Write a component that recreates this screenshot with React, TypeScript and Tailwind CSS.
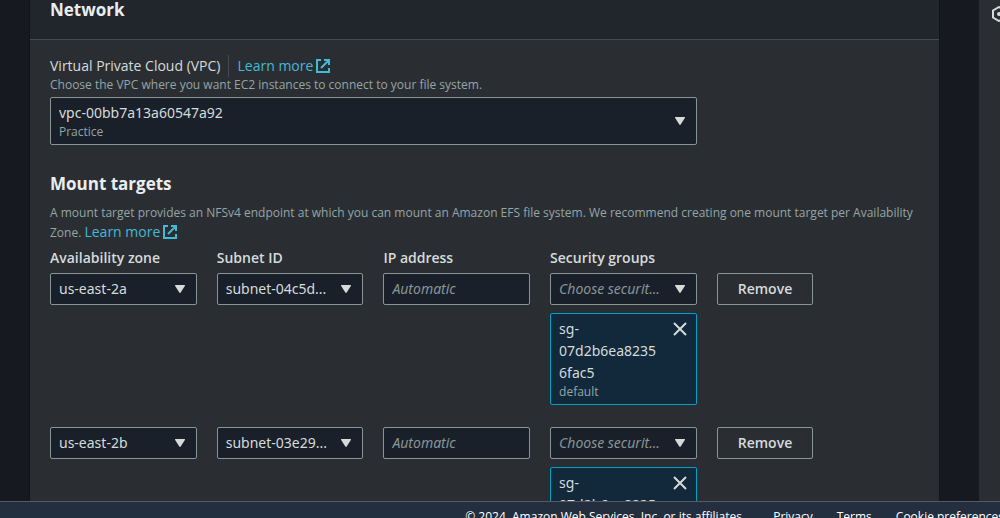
import React from "react";

function Caret() {
  return (
    <svg viewBox="0 0 10 8" className="pointer-events-none col-start-1 row-start-1 mr-3 h-2 w-2.5 self-center justify-self-end fill-[#d5dbdb]" aria-hidden="true">
      <path d="M0.3 0H9.7Q10.2 0.3 9.8 1L5.7 7.5Q5 8.4 4.3 7.5L0.2 1Q-0.2 0.3 0.3 0Z" />
    </svg>
  );
}

function ExternalIcon() {
  return (
    <svg viewBox="0 0 14 14" className="ml-[3px] inline-block size-3.5 fill-none stroke-[#44b9d6] stroke-2 align-[-2px]" aria-hidden="true">
      <path d="M5 1H1V13H13V9M8 1H13V6M12.5 1.5L5 9" />
    </svg>
  );
}

function LearnMore() {
  return (
    <a href="#learn-more" className="text-[14px] leading-none whitespace-nowrap text-[#44b9d6]">
      Learn more
      <ExternalIcon />
    </a>
  );
}

const fieldClass =
  "h-8 w-full min-w-0 appearance-none rounded-xs border border-[#879596] bg-[#1a2029] pl-2 font-['Noto_Sans',sans-serif] text-[14px] leading-5";

function Dropdown({ label, value, placeholder = false }: { label: string; value: string; placeholder?: boolean }) {
  return (
    <div className="grid self-start">
      <select
        aria-label={label}
        className={`${fieldClass} col-start-1 row-start-1 pr-7 ${placeholder ? "text-[#879596] italic" : "text-[#d5dbdb]"}`}
      >
        <option>{value}</option>
      </select>
      <Caret />
    </div>
  );
}

function SecurityGroupToken() {
  return (
    <div className="mt-2 flex items-start justify-between rounded-xs border border-[#00a1c9] bg-[#12293b] py-1 pr-2 pl-2 text-[#d5dbdb]">
      <div className="w-[100px]">
        <p className="font-['Noto_Sans',sans-serif] text-[14px] leading-[22px] break-words">sg-<br />07d2b6ea82356fac5</p>
        <p className="text-[12px] leading-4 text-[#95a5a6]">default</p>
      </div>
      <button type="button" aria-label="Remove security group" className="mt-[3px]">
        <svg viewBox="0 0 16 16" className="size-4 fill-none stroke-[#d5dbdb] stroke-2" aria-hidden="true">
          <path d="M2 2L14 14M14 2L2 14" />
        </svg>
      </button>
    </div>
  );
}

function TargetRow({ zone, subnet }: { zone: string; subnet: string }) {
  return (
    <div className="grid grid-cols-4 gap-x-5">
      <div className="col-span-3 grid grid-cols-4 gap-x-5">
        <Dropdown label="Availability zone" value={zone} />
        <Dropdown label="Subnet ID" value={subnet} />
        <div>
          <input aria-label="IP address" placeholder="Automatic" className={`${fieldClass} pb-0.5 text-[#d5dbdb] placeholder:text-[#879596] placeholder:italic`} />
        </div>
        <div>
          <Dropdown label="Security groups" value="Choose securit..." placeholder />
          <SecurityGroupToken />
        </div>
      </div>
      <div>
        <button type="button" className="h-8 rounded-xs border border-[#879596] px-5 text-[14px] leading-5 font-semibold text-[#d5dbdb]">
          Remove
        </button>
      </div>
    </div>
  );
}

const targets = [
  { zone: "us-east-2a", subnet: "subnet-04c5d..." },
  { zone: "us-east-2b", subnet: "subnet-03e29..." },
];

export default function App() {
  return (
    <div className="flex h-screen flex-col overflow-hidden bg-[#16191f] font-['Open_Sans','Noto_Sans',sans-serif] text-[#d5dbdb]">
      <div className="flex min-h-0 flex-1 overflow-hidden pl-[29px]">
        <main className="h-max min-w-0 flex-1 border-x border-[#121418] bg-[#2a2e33]">
          <header className="flex h-10 items-start border-b border-[#444a50] bg-[#21252c] px-5">
            <h2 className="text-[17px] leading-5 font-bold text-[#eaeded]">Network</h2>
          </header>
          <div className="px-5 pt-[15px] pb-5">
            <div className="flex items-center text-[14px] leading-[22px]">
              <label htmlFor="vpc" className="border-r border-[#444a50] pr-2">
                Virtual Private Cloud (VPC)
              </label>
              <span className="pl-2"><LearnMore /></span>
            </div>
            <p className="text-[12px] leading-4 text-[#95a5a6]">
              Choose the VPC where you want EC2 instances to connect to your file system.
            </p>
            <div className="grid grid-cols-4 gap-x-5 pt-1">
              <div className="col-span-3 grid">
                <select id="vpc" className="col-start-1 row-start-1 h-12 appearance-none rounded-xs border border-[#879596] bg-[#1a2029] pr-8 pb-4 pl-2 font-['Noto_Sans',sans-serif] text-[14px] leading-5 text-[#d5dbdb]">
                  <option>vpc-00bb7a13a60547a92</option>
                </select>
                <span className="pointer-events-none col-start-1 row-start-1 self-end pb-1 pl-[9px] text-[12px] leading-[18px] text-[#95a5a6]">
                  Practice
                </span>
                <Caret />
              </div>
            </div>

            <h3 className="pt-7 text-[17px] leading-[22px] font-bold text-[#eaeded]">Mount targets</h3>
            <p className="pt-2 text-[12px] leading-5 text-[#95a5a6]">
              A mount target provides an NFSv4 endpoint at which you can mount an Amazon EFS file system. We recommend creating one mount target per Availability Zone. <LearnMore />
            </p>
            <div className="grid grid-cols-4 gap-x-5 pt-1 pb-1 text-[14px] leading-[22px] font-semibold">
              <div className="col-span-3 grid grid-cols-4 gap-x-5">
                <span>Availability zone</span>
                <span>Subnet ID</span>
                <span>IP address</span>
                <span>Security groups</span>
              </div>
            </div>
            <div className="flex flex-col gap-[22px]">
              {targets.map((target) => (
                <TargetRow key={target.zone} {...target} />
              ))}
            </div>
          </div>
        </main>
        <aside className="ml-[39px] flex w-[21px] shrink-0 justify-start overflow-hidden bg-[#2a2e33] pt-1.5 pl-3">
          <button type="button" aria-label="Open settings" className="size-4 shrink-0">
            <svg viewBox="0 0 16 16" className="size-4 fill-none stroke-[#d5dbdb] stroke-2" aria-hidden="true">
              <path d="M8 1L14 4.5V11.5L8 15L2 11.5V4.5Z" />
              <circle cx="8" cy="8" r="1" />
            </svg>
          </button>
        </aside>
      </div>
      <footer className="-mr-1 flex h-[17px] shrink-0 justify-end overflow-hidden border-t border-[#545b64] bg-[#232f3e] pt-[7px] text-[12px] leading-4 font-medium whitespace-nowrap text-white">
        <span>© 2024, Amazon Web Services, Inc. or its affiliates.</span>
        <a href="#privacy" className="ml-7">Privacy</a>
        <a href="#terms" className="ml-6">Terms</a>
        <a href="#cookies" className="ml-6">Cookie preferences</a>
      </footer>
    </div>
  );
}
